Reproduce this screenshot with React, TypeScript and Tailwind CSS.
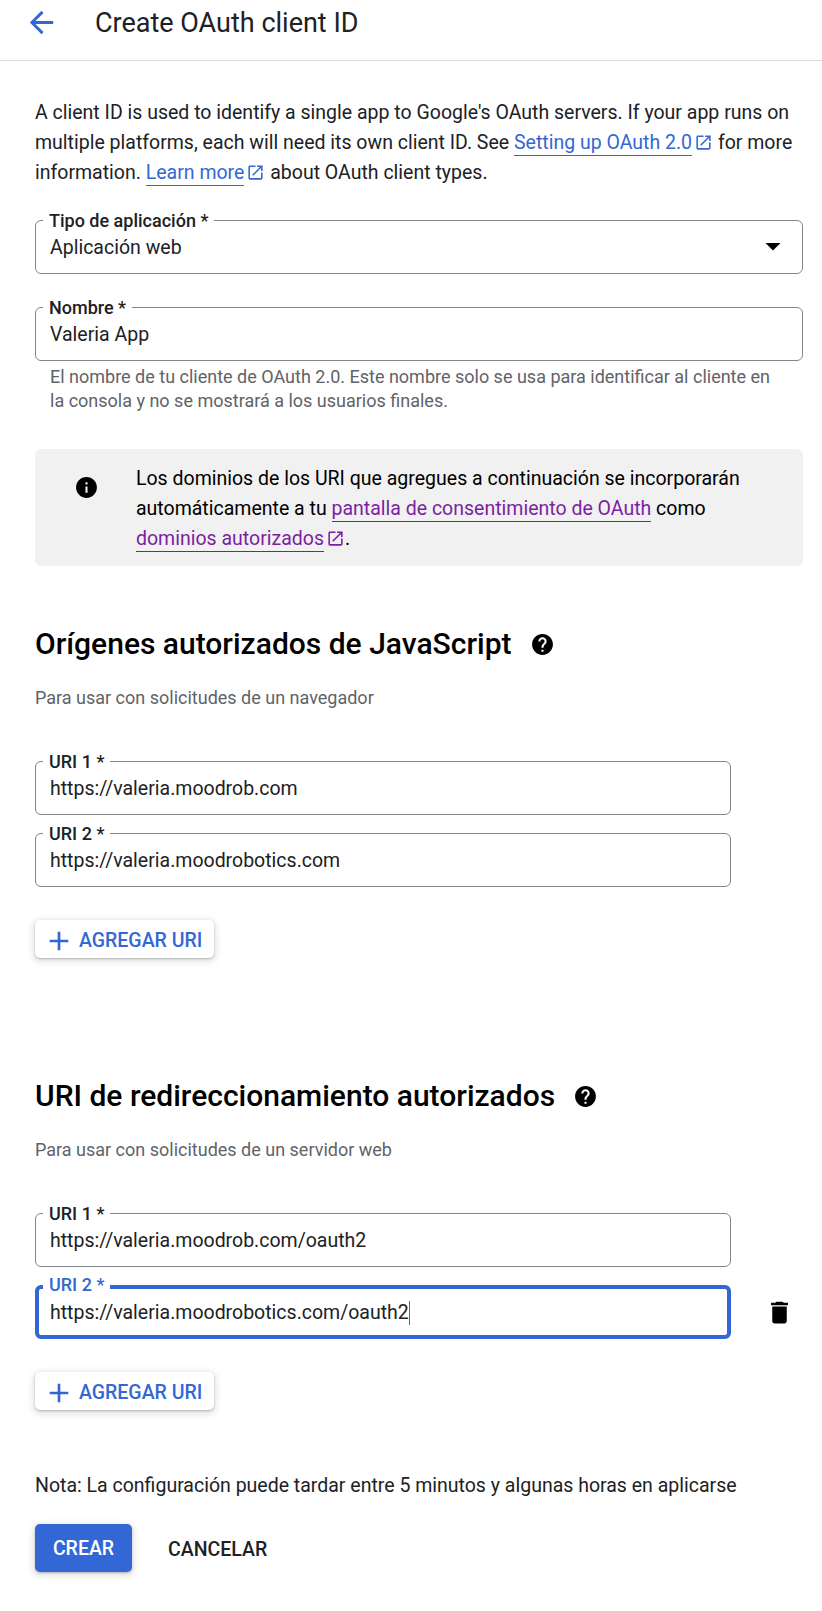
import React from "react";

const OPEN_NEW = "M19 19H5V5h7V3H5c-1.11 0-2 .9-2 2v14c0 1.1.89 2 2 2h14c1.1 0 2-.9 2-2v-7h-2v7zM14 3v2h3.59l-9.83 9.83 1.41 1.41L19 6.41V10h2V3h-7z";
const HELP = "M12 2C6.48 2 2 6.48 2 12s4.48 10 10 10 10-4.48 10-10S17.52 2 12 2zm1 17h-2v-2h2v2zm2.07-7.75l-.9.92C13.45 12.9 13 13.5 13 15h-2v-.5c0-1.1.45-2.1 1.17-2.83l1.24-1.26c.37-.36.59-.86.59-1.41 0-1.1-.9-2-2-2s-2 .9-2 2H8c0-2.21 1.79-4 4-4s4 1.79 4 4c0 .88-.36 1.68-.93 2.25z";
const INFO = "M12 2C6.48 2 2 6.48 2 12s4.48 10 10 10 10-4.48 10-10S17.52 2 12 2zm1 15h-2v-6h2v6zm0-8h-2V7h2v2z";

function Icon({ d, className }: { d: string; className: string }) {
  return (
    <svg viewBox="0 0 24 24" fill="currentColor" className={className}>
      <path d={d} />
    </svg>
  );
}

function ExtLink({ children, color }: { children: React.ReactNode; color: "blue" | "purple" }) {
  const c = color === "blue" ? "text-[#3367d6] border-[#3367d6]" : "text-[#7b1fa2] border-[#7b1fa2]";
  const i = color === "blue" ? "text-[#3367d6]" : "text-[#7b1fa2]";
  return (
    <>
      <span className={`border-b pb-[1px] ${c}`}>{children}</span>
      <Icon d={OPEN_NEW} className={`inline-block w-[19px] h-[19px] ml-[2px] -mt-[3px] align-middle ${i}`} />
    </>
  );
}

function Field({ label, value, focused, caret, right }: { label: string; value: string; focused?: boolean; caret?: boolean; right?: React.ReactNode }) {
  return (
    <div className={`relative h-[54px] rounded-[6px] flex items-center ${focused ? "border-[4px] border-[#3367d6] pl-[11px]" : "border border-[#80868b] pl-[14px]"}`}>
      <span
        className={`absolute h-[20px] leading-[20px] bg-white px-[6px] text-[18px] font-medium ${focused ? "left-[4px] -top-[14px] text-[#3367d6]" : "left-[7px] -top-[10px] text-[#202124]"}`}
      >
        {label}
      </span>
      <span className={`mt-[2px] leading-[24px] text-[19.5px] text-[#202124] ${caret ? "border-r border-[#3367d6]" : ""}`}>{value}</span>
      {right}
    </div>
  );
}

function AddButton() {
  return (
    <button className="h-[38px] w-[179px] rounded-[5px] bg-white shadow-[0_1px_2px_rgba(60,64,67,0.3),0_2px_6px_2px_rgba(60,64,67,0.15)] flex items-center pl-[8px] pt-[3px] text-[#3367d6] text-[19.5px] font-medium">
      <svg viewBox="0 0 24 24" fill="currentColor" className="w-[32px] h-[32px] mr-[4px] shrink-0">
        <path d="M19 13h-6v6h-2v-6H5v-2h6V5h2v6h6v2z" />
      </svg>
      AGREGAR URI
    </button>
  );
}

function SectionHead({ title, sub }: { title: string; sub: string }) {
  return (
    <>
      <div className="flex items-center h-[40px]">
        <h2 className="pt-[1px] text-[30px] leading-[40px] font-medium text-black">{title}</h2>
        <Icon d={HELP} className="w-[25px] h-[25px] ml-[18px] mt-[2px] text-black" />
      </div>
      <p className="mt-[23px] text-[18px] leading-[24px] text-[#5f6368]">{sub}</p>
    </>
  );
}

export default function App() {
  return (
    <div className="w-[822px] h-[1611px] bg-white text-[#202124] font-['Roboto',sans-serif] overflow-hidden">
      <header className="h-[61px] border-b border-[#dadce0] flex items-start">
        <svg viewBox="0 0 24 24" fill="currentColor" className="w-[35px] h-[35px] ml-[24px] mt-[5px] text-[#3367d6] shrink-0">
          <path d="M20 11H7.83l5.59-5.59L12 4l-8 8 8 8 1.41-1.41L7.83 13H20v-2z" />
        </svg>
        <h1 className="ml-[36px] text-[27px] leading-[46px] text-[#202124]">Create OAuth client ID</h1>
      </header>

      <main className="px-[35px] pt-[37px]">
        <p className="text-[19.5px] leading-[30px] w-[765px]">
          A client ID is used to identify a single app to Google's OAuth servers. If your app runs on multiple platforms, each will need its own client ID. See{" "}
          <ExtLink color="blue">Setting up OAuth 2.0</ExtLink> for more information.{" "}
          <ExtLink color="blue">Learn more</ExtLink> about OAuth client types.
        </p>

        <div className="mt-[32px] w-[768px]">
          <Field
            label="Tipo de aplicación *"
            value="Aplicación web"
            right={
              <svg viewBox="0 0 24 24" fill="currentColor" className="absolute right-[11px] top-[7px] w-[36px] h-[36px] text-black">
                <path d="M7 10l5 5 5-5z" />
              </svg>
            }
          />
          <div className="mt-[33px]">
            <Field label="Nombre *" value="Valeria App" />
          </div>
          <p className="mt-[4px] pl-[15px] pr-[20px] text-[18px] leading-[24px] text-[#5f6368]">
            El nombre de tu cliente de OAuth 2.0. Este nombre solo se usa para identificar al cliente en la consola y no se mostrará a los usuarios finales.
          </p>
          <div className="mt-[36px] h-[117px] rounded-[6px] bg-[#f1f1f1] flex pt-[15px]">
            <Icon d={INFO} className="w-[25px] h-[25px] ml-[39px] mt-[11px] shrink-0 text-black" />
            <p className="ml-[37px] w-[640px] text-[19.5px] leading-[30px] text-black">
              Los dominios de los URI que agregues a continuación se incorporarán automáticamente a tu{" "}
              <span className="border-b pb-[1px] text-[#7b1fa2] border-[#7b1fa2]">pantalla de consentimiento de OAuth</span> como{" "}
              <ExtLink color="purple">dominios autorizados</ExtLink>.
            </p>
          </div>
        </div>

        <section className="mt-[57px]">
          <SectionHead title="Orígenes autorizados de JavaScript" sub="Para usar con solicitudes de un navegador" />
          <div className="mt-[51px] w-[696px] flex flex-col gap-[18px]">
            <Field label="URI 1 *" value="https://valeria.moodrob.com" />
            <Field label="URI 2 *" value="https://valeria.moodrobotics.com" />
          </div>
          <div className="mt-[33px]">
            <AddButton />
          </div>
        </section>

        <section className="mt-[117px]">
          <SectionHead title="URI de redireccionamiento autorizados" sub="Para usar con solicitudes de un servidor web" />
          <div className="mt-[51px] flex flex-col gap-[18px]">
            <div className="w-[696px]">
              <Field label="URI 1 *" value="https://valeria.moodrob.com/oauth2" />
            </div>
            <div className="flex items-center">
              <div className="w-[696px] shrink-0">
                <Field label="URI 2 *" value="https://valeria.moodrobotics.com/oauth2" focused caret />
              </div>
              <svg viewBox="0 0 24 24" fill="currentColor" className="w-[29px] h-[29px] ml-[34px] shrink-0 text-black">
                <path d="M6 19c0 1.1.9 2 2 2h8c1.1 0 2-.9 2-2V7H6v12zM19 4h-3.5l-1-1h-5l-1 1H5v2h14V4z" />
              </svg>
            </div>
          </div>
          <div className="mt-[33px]">
            <AddButton />
          </div>
        </section>

        <p className="mt-[61px] text-[19.5px] leading-[30px] text-[#202124]">Nota: La configuración puede tardar entre 5 minutos y algunas horas en aplicarse</p>

        <div className="mt-[23px] flex items-center">
          <button className="h-[48px] w-[97px] rounded-[5px] bg-[#3367d6] text-white text-[19.5px] font-medium pt-[1px] shadow-[0_1px_2px_rgba(60,64,67,0.3),0_2px_6px_2px_rgba(60,64,67,0.15)]">CREAR</button>
          <button className="ml-[36px] pt-[4px] text-[19.5px] font-medium text-[#202124]">CANCELAR</button>
        </div>
      </main>
    </div>
  );
}
